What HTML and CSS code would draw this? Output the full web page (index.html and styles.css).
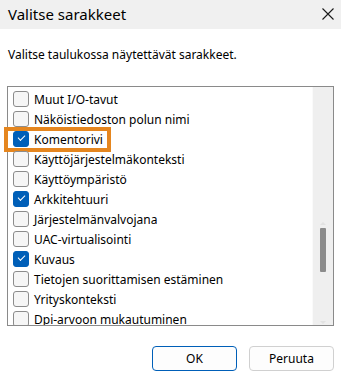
FILE: index.html
```html
<!DOCTYPE html>
<html lang="fi">
<head>
  <meta charset="UTF-8">
  <meta name="viewport" content="width=device-width, initial-scale=1.0">
  <title>Valitse sarakkeet</title>
  <link rel="stylesheet" href="styles.css">
</head>
<body>
  <div class="dialog">
    <!-- Title bar -->
    <div class="titlebar">
      <span class="title">Valitse sarakkeet</span>
      <span class="close">
        <svg width="12" height="12" viewBox="0 0 12 12">
          <path d="M0.5 0.5 L11.5 11.5 M11.5 0.5 L0.5 11.5" stroke="#1a1a1a" stroke-width="1.1" fill="none"/>
        </svg>
      </span>
    </div>

    <div class="content">
      <p class="desc">Valitse taulukossa näytettävät sarakkeet.</p>

      <!-- Column list -->
      <div class="listbox">
        <div class="items">
          <div class="row"><span class="box"></span>Muut I/O-tavut</div>
          <div class="row"><span class="box"></span>Näköistiedoston polun nimi</div>
          <div class="row highlight"><span class="box checked"></span>Komentorivi</div>
          <div class="row"><span class="box"></span>Käyttöjärjestelmäkonteksti</div>
          <div class="row"><span class="box"></span>Käyttöympäristö</div>
          <div class="row"><span class="box checked"></span>Arkkitehtuuri</div>
          <div class="row"><span class="box"></span>Järjestelmänvalvojana</div>
          <div class="row"><span class="box"></span>UAC-virtualisointi</div>
          <div class="row"><span class="box checked"></span>Kuvaus</div>
          <div class="row"><span class="box"></span>Tietojen suorittamisen estäminen</div>
          <div class="row"><span class="box"></span>Yrityskonteksti</div>
          <div class="row"><span class="box"></span>Dpi-arvoon mukautuminen</div>
        </div>
        <div class="scrollbar">
          <span class="arrow up"></span>
          <span class="thumb"></span>
          <span class="arrow down"></span>
        </div>
      </div>

      <div class="buttons">
        <button class="btn default">OK</button>
        <button class="btn">Peruuta</button>
      </div>
    </div>
  </div>
</body>
</html>
```

FILE: styles.css
```css
/* General Styles */
body {
  margin: 0;
  font-family: "Noto Sans", Arial, sans-serif;
  font-size: 12px;
  color: #000;
  background-color: #fff;
}

.dialog {
  width: 341px;
  height: 380px;
  overflow: hidden;
}

.titlebar {
  height: 29px;
  background-color: #f0f0f0;
  display: flex;
  align-items: center;
  justify-content: space-between;
  padding: 0 7px 0 8px;
}

.title {
  font-size: 15px;
  margin-top: -2px;
}

.close {
  display: flex;
  margin-top: -2px;
}

.content {
  padding: 0 7px;
}

.desc {
  margin: 17px 0 0 1px;
  line-height: 18px;
  height: 40px;
}

/* List */
.listbox {
  height: 238px;
  border: 1px solid #8a8a8a;
  display: flex;
  overflow-x: visible;
  overflow-y: clip; /* last row is cut off, annotation may stick out sideways */
}

.items {
  flex: 1;
  padding: 2px 0 0 5px;
}

.row {
  position: relative;
  height: 20px;
  display: flex;
  align-items: center;
  gap: 5px;
  white-space: nowrap;
}

.box {
  width: 14px;
  height: 14px;
  border: 1px solid #8c8c8c;
  border-radius: 3px;
  background-color: #f6f6f6;
  flex-shrink: 0;
  position: relative;
}

.box.checked {
  background-color: #005fb8;
  border-color: #005fb8;
}

.box.checked::after {
  content: "";
  position: absolute;
  left: 4px;
  top: 3px;
  width: 6px;
  height: 3px;
  border-left: 1px solid #fff;
  border-bottom: 1px solid #fff;
  transform: rotate(-45deg);
}

/* orange annotation frame */
.highlight::before {
  content: "";
  position: absolute;
  left: -9px;
  top: -2px;
  width: 99px;
  height: 17px;
  border: 4px solid #e5861f;
}

.scrollbar {
  width: 20px;
  background-color: #efefef;
  border-left: 1px solid #fafafa;
  position: relative;
}

.thumb {
  position: absolute;
  left: 7px;
  top: 141px;
  width: 6px;
  height: 44px;
  background-color: #8b8b8b;
  border-radius: 1px;
}

.arrow {
  position: absolute;
  left: 7px;
  width: 0;
  height: 0;
  border-left: 3px solid transparent;
  border-right: 3px solid transparent;
}

.arrow.up {
  top: 135px;
  border-bottom: 3px solid #e2e2e2;
}

.arrow.down {
  bottom: 1px;
  border-top: 3px solid #e2e2e2;
}

/* Buttons */
.buttons {
  display: flex;
  justify-content: flex-end;
  gap: 12px;
  margin-top: 20px;
}

.btn {
  width: 85px;
  height: 25px;
  font-family: "Noto Sans", Arial, sans-serif;
  font-size: 12px;
  color: #000;
  background-color: #fdfdfd;
  border: 1px solid #d0d0d0;
  border-radius: 4px;
  padding: 0;
}

.btn.default {
  border-color: #005fb8;
}
```
